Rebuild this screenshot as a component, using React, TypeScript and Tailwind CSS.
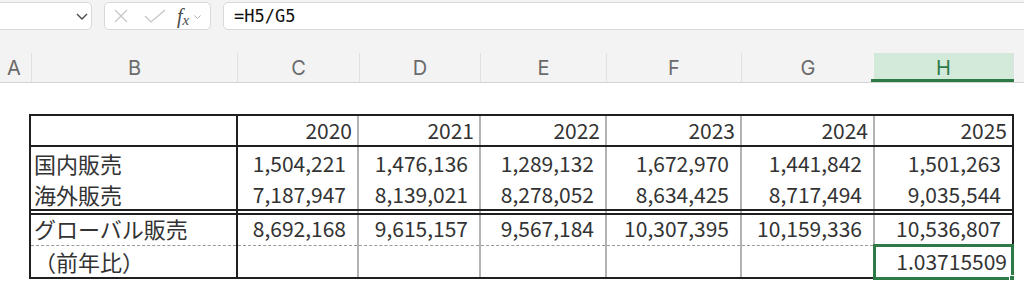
import React from "react";

type Kind = "label" | "num" | "year" | "ratio" | "empty";
type Cell = { t?: string; k: Kind };

const colCls = [
  "w-[207px] border-l-2 border-l-[#1f1f1f]",
  "w-[121px] border-l-2 border-l-[#1f1f1f]",
  "w-[122px] border-l-2 border-l-[#b3b3b3]",
  "w-[126px] border-l-2 border-l-[#b3b3b3]",
  "w-[135px] border-l-2 border-l-[#b3b3b3]",
  "w-[133px] border-l-2 border-l-[#b3b3b3]",
  "w-[141px] border-l-2 border-r-2 border-l-[#b3b3b3] border-r-[#1f1f1f]",
];

const kindCls: Record<Kind, string> = {
  label: "justify-start pl-[3px] text-[22px]",
  num: "justify-end pr-[11px] text-[21px]",
  year: "justify-end pr-[5px] text-[21px]",
  ratio: "justify-end pr-[5px] text-[21px]",
  empty: "",
};

function Row({ cells, h, pb, selectLast }: { cells: Cell[]; h: string; pb: string; selectLast?: boolean }) {
  return (
    <div className={`flex ${h}`}>
      {cells.map((c, i) => (
        <div
          key={i}
          className={`relative flex items-end leading-none whitespace-nowrap ${colCls[i]} ${kindCls[c.k]} ${pb}`}
        >
          {c.t}
          {selectLast && i === 6 && (
            <div className="absolute -left-[2px] -top-[2px] right-[-2px] -bottom-[3px] border-[3px] border-[#2e7a46]">
              <div className="absolute -right-[4px] -bottom-[4px] w-[6px] h-[6px] bg-[#2e7a46] border border-white" />
            </div>
          )}
        </div>
      ))}
    </div>
  );
}

function HLine() {
  return <div className="h-[2px] bg-[#1f1f1f]" />;
}

function Gap() {
  return (
    <div className="flex h-[2px]">
      {colCls.map((c, i) => (
        <div key={i} className={c} />
      ))}
    </div>
  );
}

function Dashed() {
  return (
    <div className="flex h-[1px]">
      {colCls.map((c, i) => (
        <div key={i} className={`${c} relative`}>
          {i < 6 && (
            <div className="absolute inset-x-0 top-0 border-t border-dashed border-[#9a9a9a]" />
          )}
        </div>
      ))}
    </div>
  );
}

const years = ["2020", "2021", "2022", "2023", "2024", "2025"];
const dom = ["1,504,221", "1,476,136", "1,289,132", "1,672,970", "1,441,842", "1,501,263"];
const ovs = ["7,187,947", "8,139,021", "8,278,052", "8,634,425", "8,717,494", "9,035,544"];
const glob = ["8,692,168", "9,615,157", "9,567,184", "10,307,395", "10,159,336", "10,536,807"];

export default function App() {
  const hdr = [
    { l: "B", w: "w-[206px]" },
    { l: "C", w: "w-[122px]" },
    { l: "D", w: "w-[121px]" },
    { l: "E", w: "w-[126px]" },
    { l: "F", w: "w-[135px]" },
    { l: "G", w: "w-[133px]" },
  ];
  return (
    <div className="w-[1024px] h-[293px] overflow-hidden bg-white">
      {/* toolbar + column headers */}
      <div className="h-[83px] bg-[#f3f3f3] border-b border-[#d4d4d4] flex flex-col">
        <div className="flex pt-[2px] h-[30px]">
          <div className="-ml-[10px] w-[102px] h-[28px] bg-white border border-[#d8d8d8] rounded-[5px] flex items-center justify-end pr-[3px]">
            <svg width="12" height="8" viewBox="0 0 12 8" className="mt-[1px]">
              <polyline points="1,1 6,6 11,1" fill="none" stroke="#4a4a4a" strokeWidth="1.4" />
            </svg>
          </div>
          <div className="ml-[12px] w-[107px] h-[28px] bg-white border border-[#d8d8d8] rounded-[5px] flex items-center">
            <svg width="16" height="16" viewBox="0 0 16 16" className="ml-[8px]">
              <path d="M2 2 L14 14 M14 2 L2 14" stroke="#c4c4c4" strokeWidth="1.2" fill="none" />
            </svg>
            <svg width="22" height="14" viewBox="0 0 22 14" className="ml-[15px]">
              <path d="M1 7 L7 13 L21 1" stroke="#c4c4c4" strokeWidth="1.2" fill="none" />
            </svg>
            <span
              className="ml-[11px] text-[#4a4a4a] italic leading-none text-[20px]"
              style={{ fontFamily: '"Liberation Serif", serif' }}
            >
              f
              <span className="text-[15px] relative top-[2px]" style={{ fontFamily: '"Liberation Serif", serif' }}>
                x
              </span>
            </span>
            <svg width="7" height="5" viewBox="0 0 7 5" className="ml-[5px] mt-[2px]">
              <polyline points="0.5,0.5 3.5,3.5 6.5,0.5" fill="none" stroke="#b0b0b0" strokeWidth="1" />
            </svg>
          </div>
          <div className="ml-[12px] flex-1 -mr-[10px] h-[28px] bg-white border border-[#d8d8d8] rounded-[5px] flex items-center pl-[10px]">
            <span
              className="text-[17px] text-[#111111] leading-none"
              style={{ fontFamily: '"DejaVu Sans Mono", "Liberation Mono", monospace' }}
            >
              =H5/G5
            </span>
          </div>
        </div>
        <div
          className="mt-[23px] h-[29px] flex text-[20px] text-[#6a6a6a]"
          style={{ fontFamily: 'Inter, "Liberation Sans", sans-serif' }}
        >
          <div className="w-[31px] flex items-center pl-[7px]">A</div>
          {hdr.map((h) => (
            <div key={h.l} className={`${h.w} border-l border-[#e0e0e0] flex items-center justify-center`}>
              {h.l}
            </div>
          ))}
          <div className="w-[139px] relative bg-[#d3e9da] text-[#2e7a46] flex items-center justify-center">
            H
            <div className="absolute -left-[3px] -right-[1px] bottom-0 h-[3px] bg-[#2e7a46]" />
          </div>
          <div className="flex-1 border-l border-[#e0e0e0]" />
        </div>
      </div>

      {/* table */}
      <div
        className="ml-[29px] mt-[31px] w-[985px] text-[#333333]"
        style={{ fontFamily: '"Noto Sans CJK JP", "Noto Sans", sans-serif' }}
      >
        <HLine />
        <Row h="h-[29px]" pb="pb-[4px]" cells={[{ k: "empty" }, ...years.map((t) => ({ t, k: "year" as Kind }))]} />
        <HLine />
        <Row h="h-[31px]" pb="pb-[4px]" cells={[{ t: "国内販売", k: "label" }, ...dom.map((t) => ({ t, k: "num" as Kind }))]} />
        <Row h="h-[31px]" pb="pb-[4px]" cells={[{ t: "海外販売", k: "label" }, ...ovs.map((t) => ({ t, k: "num" as Kind }))]} />
        <HLine />
        <Gap />
        <HLine />
        <Row h="h-[30px]" pb="pb-[6px]" cells={[{ t: "グローバル販売", k: "label" }, ...glob.map((t) => ({ t, k: "num" as Kind }))]} />
        <Dashed />
        <Row
          h="h-[31px]"
          pb="pb-[5px]"
          selectLast
          cells={[
            { t: "（前年比）", k: "label" },
            { k: "empty" },
            { k: "empty" },
            { k: "empty" },
            { k: "empty" },
            { k: "empty" },
            { t: "1.03715509", k: "ratio" },
          ]}
        />
        <HLine />
      </div>
    </div>
  );
}
